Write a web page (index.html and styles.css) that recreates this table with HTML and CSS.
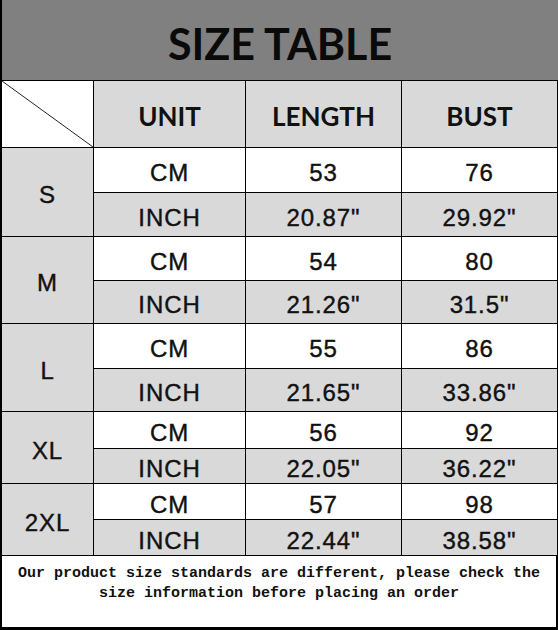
FILE: index.html
```html
<!DOCTYPE html>
<html>
<head>
<meta charset="utf-8">
<link rel="stylesheet" href="styles.css">
</head>
<body>
<div class="page">
  <div class="title">SIZE TABLE</div>
  <div class="grid">
    <div class="cell diag"></div>
    <div class="cell head">UNIT</div>
    <div class="cell head">LENGTH</div>
    <div class="cell head">BUST</div>

    <div class="cell size span">S</div>
    <div class="cell w">CM</div><div class="cell w">53</div><div class="cell w">76</div>
    <div class="cell g">INCH</div><div class="cell g">20.87"</div><div class="cell g">29.92"</div>

    <div class="cell size span">M</div>
    <div class="cell w">CM</div><div class="cell w">54</div><div class="cell w">80</div>
    <div class="cell g">INCH</div><div class="cell g">21.26"</div><div class="cell g">31.5"</div>

    <div class="cell size span">L</div>
    <div class="cell w">CM</div><div class="cell w">55</div><div class="cell w">86</div>
    <div class="cell g">INCH</div><div class="cell g">21.65"</div><div class="cell g">33.86"</div>

    <div class="cell size span">XL</div>
    <div class="cell w">CM</div><div class="cell w">56</div><div class="cell w">92</div>
    <div class="cell g">INCH</div><div class="cell g">22.05"</div><div class="cell g">36.22"</div>

    <div class="cell size span">2XL</div>
    <div class="cell w">CM</div><div class="cell w">57</div><div class="cell w">98</div>
    <div class="cell g">INCH</div><div class="cell g">22.44"</div><div class="cell g">38.58"</div>
  </div>
  <div class="note">Our product size standards are different, please check the<br>size information before placing an order</div>
</div>
</body>
</html>
```
FILE: styles.css
```css
html, body {
  margin: 0;
  padding: 0;
  background: #fff;
}
.page {
  width: 558px;
  height: 630px;
  display: flex;
  flex-direction: column;
}
.title {
  height: 80px;
  box-sizing: border-box;
  background: #808080;
  border-left: 2px solid #000;
  display: flex;
  align-items: center;
  justify-content: center;
  font-family: Lato, "Open Sans", sans-serif;
  font-weight: 700;
  font-size: 43px;
  color: #0a0a0a;
  padding-top: 7px;
}
.grid {
  display: grid;
  box-sizing: border-box;
  width: 558px;
  grid-template-columns: 91px 151px 155px 155px;
  grid-template-rows: 66px 44px 43px 43px 42px 44px 42px 36px 34px 35px 35px;
  gap: 1px;
  background: #000;
  border-left: 2px solid #000;
  border-top: 1px solid #000;
  border-bottom: 1px solid #000;
  border-right: 1px solid #000;
}
.cell {
  display: flex;
  align-items: center;
  justify-content: center;
  padding-top: 6px;
  font-family: "Liberation Sans", Arial, sans-serif;
  font-size: 24px;
  letter-spacing: 0.9px;
  -webkit-text-stroke: 0.4px #111;
  color: #111;
}
.w { background: #fff; }
.g { background: #d9d9d9; }
.size {
  background: #d9d9d9;
  grid-row: span 2;
}
.head {
  background: #d9d9d9;
  font-family: Lato, "Open Sans", sans-serif;
  font-weight: 700;
  font-size: 26px;
  letter-spacing: 0;
  -webkit-text-stroke: 0;
  padding-top: 3px;
}
.diag {
  padding-top: 0;
  background: linear-gradient(to top right, #fff calc(50% - 0.8px), #222 50%, #fff calc(50% + 0.8px));
}
.note {
  flex: 1;
  box-sizing: border-box;
  border-left: 2px solid #000;
  border-right: 2px solid #000;
  border-bottom: 3px solid #000;
  background: #fff;
  text-align: center;
  font-family: "Liberation Mono", "DejaVu Sans Mono", monospace;
  font-weight: 700;
  font-size: 15px;
  line-height: 20px;
  padding-top: 8px;
  color: #111;
}
```
